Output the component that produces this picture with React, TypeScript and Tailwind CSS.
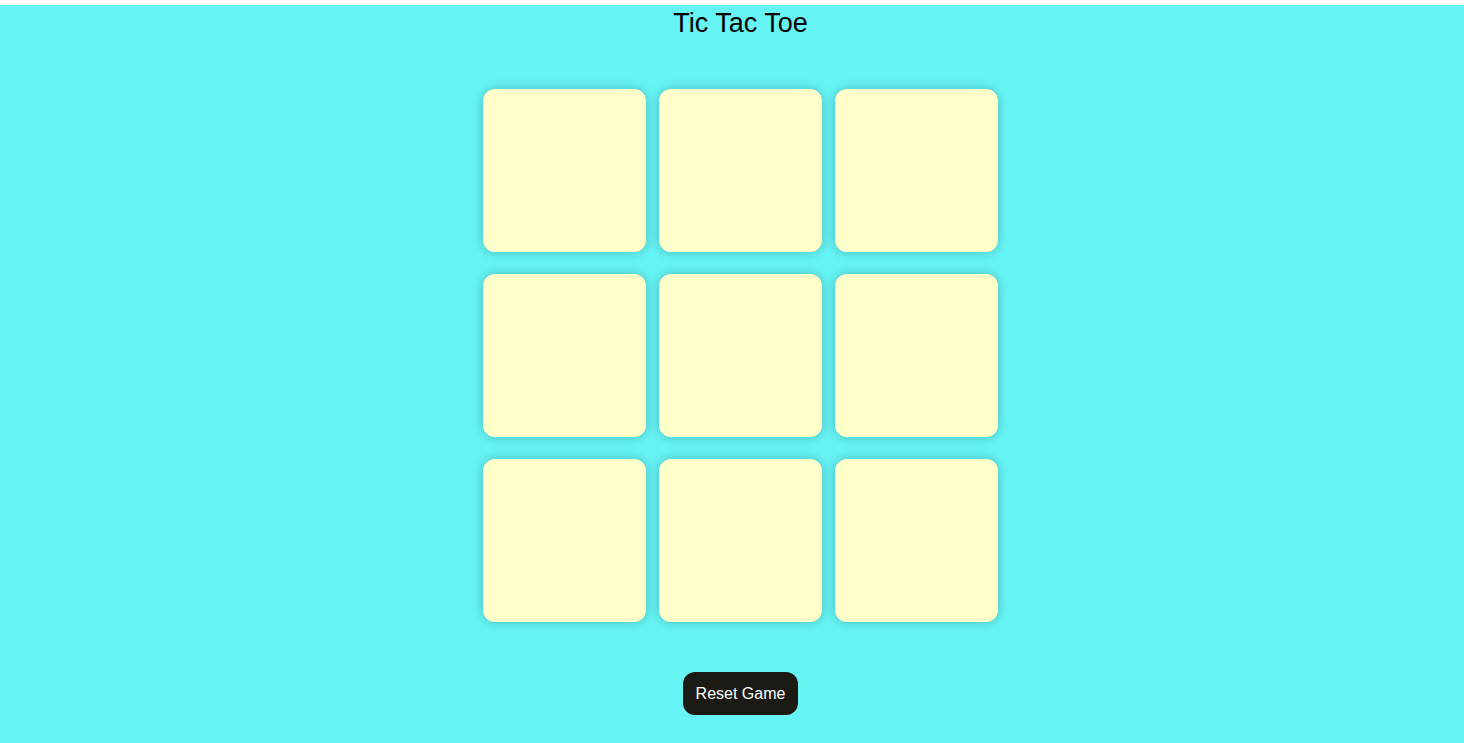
import { useState } from "react";

export default function App() {
  const [cells, setCells] = useState<(string | null)[]>(Array(9).fill(null));
  const [turn, setTurn] = useState<"X" | "O">("X");

  function play(i: number) {
    if (cells[i]) return;
    const next = [...cells];
    next[i] = turn;
    setCells(next);
    setTurn(turn === "X" ? "O" : "X");
  }

  function reset() {
    setCells(Array(9).fill(null));
    setTurn("X");
  }

  return (
    <div className="min-h-[743px] bg-white pt-[5px] font-['Liberation_Sans',Arial,sans-serif]">
      <div className="min-h-[738px] bg-[#66f4f5] pl-[17px] pt-[3px] flex flex-col items-center">
        <h1 className="text-[27px] leading-[30px] text-black">Tic Tac Toe</h1>
        <div className="mt-[51px] grid grid-cols-[repeat(3,163px)] gap-x-[13px] gap-y-[22px]">
          {cells.map((c, i) => (
            <button
              key={i}
              type="button"
              onClick={() => play(i)}
              className="w-[163px] h-[163px] rounded-[12px] bg-[#ffffca] shadow-[0_0_12px_rgba(0,0,0,0.24)] text-6xl text-gray-800 cursor-pointer"
            >
              {c}
            </button>
          ))}
        </div>
        <button
          type="button"
          onClick={reset}
          className="mt-[50px] h-[43px] px-[13px] rounded-[12px] bg-[#1b1a15] text-white text-base cursor-pointer"
        >
          Reset Game
        </button>
      </div>
    </div>
  );
}
